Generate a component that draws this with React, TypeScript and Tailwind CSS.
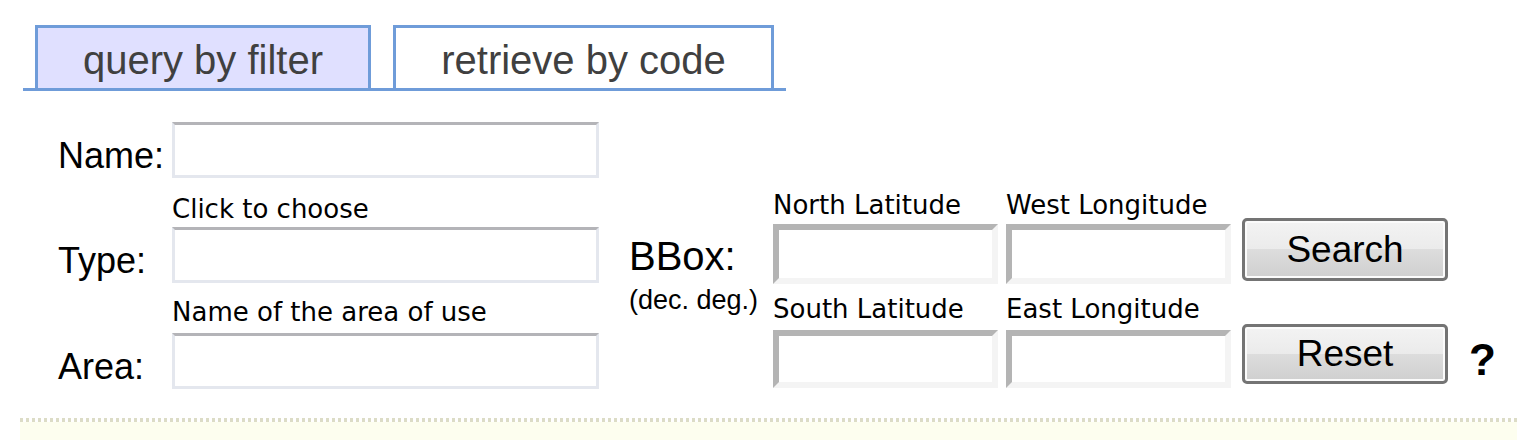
import React from 'react';

const hint = "h-[30px] whitespace-nowrap font-['DejaVu_Sans',Verdana,sans-serif] text-[26px] leading-[30px] text-black";
const field = 'h-[56px] w-[427px] border-[3px] border-[#e4e7ee] border-t-[#b4b4b8] bg-white';
const coord = 'w-[225px] border-[6px] border-[#f4f4f4] border-t-[#b4b4b4] border-l-[#b4b4b4] bg-white';
const button =
  'flex w-[206px] items-center justify-center rounded-[5px] border-[3px] border-[#747474] bg-[linear-gradient(to_bottom,#f3f3f3_0%,#ebebeb_50%,#dddddd_50%,#cfcfcf_100%)] text-[37px] text-black shadow-[inset_0_0_0_2px_#fbfbfb]';
const label = 'w-[114px] whitespace-nowrap pb-[4px] text-[36px] leading-[36px]';

const App = () => {
  return (
    <div className="h-[440px] w-[1517px] overflow-hidden bg-white font-['Liberation_Sans',Arial,sans-serif] text-black">
      {/* tabs */}
      <div className="pl-[23px] pt-[25px]">
        <div className="flex w-[763px] items-end gap-[22px] border-b-[3px] border-[#6f9cd9] pl-[12px]">
          <div className="flex h-[63px] w-[336px] items-center justify-center border-[3px] border-b-0 border-[#6f9cd9] bg-[#e0e0ff] pt-[3px] text-[40px] text-[#404040]">
            query by filter
          </div>
          <div className="flex h-[63px] w-[381px] items-center justify-center border-[3px] border-b-0 border-[#6f9cd9] bg-white pt-[3px] text-[40px] text-[#404040]">
            retrieve by code
          </div>
        </div>
      </div>

      {/* form */}
      <div className="mt-[31px] flex items-start pl-[58px]">
        <div className="flex flex-col">
          <div className="flex items-end">
            <div className={label}>Name:</div>
            <div className={field} />
          </div>
          <div className="mt-[16px] flex items-end">
            <div className={label}>Type:</div>
            <div className="flex flex-col">
              <div className={hint}>Click to choose</div>
              <div className={`mt-[3px] ${field}`} />
            </div>
          </div>
          <div className="mt-[14px] flex items-end">
            <div className={label}>Area:</div>
            <div className="flex flex-col">
              <div className={hint}>Name of the area of use</div>
              <div className={`mt-[6px] ${field}`} />
            </div>
          </div>
        </div>

        <div className="ml-[30px] mt-[68px] flex">
          <div className="w-[144px]">
            <div className="mt-[43px] text-[40px] leading-[46px]">BBox:</div>
            <div className="mt-[7px] whitespace-nowrap text-[27px] leading-[29px]">(dec. deg.)</div>
          </div>

          <div className="flex flex-col">
            <div className="flex items-end">
              <div className="flex flex-col">
                <div className={hint}>North Latitude</div>
                <div className={`mt-[4px] h-[60px] ${coord}`} />
              </div>
              <div className="ml-[8px] flex flex-col">
                <div className={hint}>West Longitude</div>
                <div className={`mt-[4px] h-[60px] ${coord}`} />
              </div>
              <button className={`mb-[3px] ml-[11px] h-[63px] ${button}`}>Search</button>
            </div>
            <div className="mt-[10px] flex items-end">
              <div className="flex flex-col">
                <div className={hint}>South Latitude</div>
                <div className={`mt-[6px] h-[58px] ${coord}`} />
              </div>
              <div className="ml-[8px] flex flex-col">
                <div className={hint}>East Longitude</div>
                <div className={`mt-[6px] h-[58px] ${coord}`} />
              </div>
              <button className={`mb-[4px] ml-[11px] h-[60px] ${button}`}>Reset</button>
              <div className="mb-[6px] ml-[21px] text-[44px] font-bold leading-[44px]">?</div>
            </div>
          </div>
        </div>
      </div>

      {/* footer strip */}
      <div className="ml-[20px] mt-[29px]">
        <div className="h-[4px] bg-[repeating-linear-gradient(90deg,#dcdcc6_0px,#dcdcc6_3px,transparent_3px,transparent_6px)]" />
        <div className="h-[30px] bg-[#fdfeef]" />
      </div>
    </div>
  );
};

export default App;
